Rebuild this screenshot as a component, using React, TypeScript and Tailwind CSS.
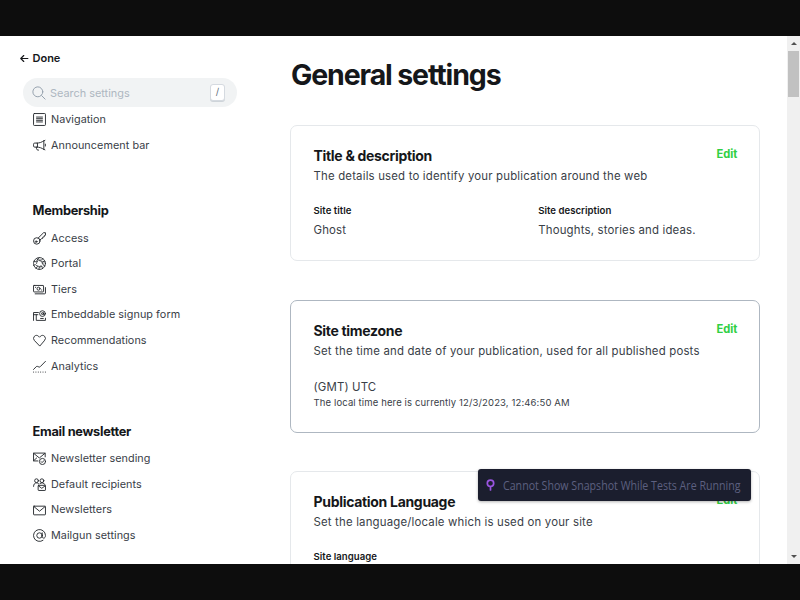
import type { ReactNode } from "react";

function Icon({ children }: { children: ReactNode }) {
  return (
    <svg
      viewBox="0 0 24 24"
      className="h-[13px] w-[13px] shrink-0 text-[#23272c]"
      fill="none"
      stroke="currentColor"
      strokeWidth="1.700"
      strokeLinecap="round"
      strokeLinejoin="round"
    >
      {children}
    </svg>
  );
}

const icons: Record<string, ReactNode> = {
  navigation: (
    <>
      <rect x="1" y="1" width="22" height="22" rx="1.5" />
      <path d="M6.5 7.5h11M6.5 10.5h11M6.5 13.5h11M6.5 16.5h11" />
    </>
  ),
  megaphone: (
    <>
      <path d="M7.5 7.5H3.2A2.2 2.2 0 0 0 1 9.700v3.100a2.200 2.200 0 0 0 2.200 2.200h4.300z" />
      <path d="M7.500 15c4.500 0 9 1.500 12.500 4.500V3C16.500 6 12 7.500 7.500 7.500" />
      <path d="M20 3.500l2-1M20 19l2 1M22.800 9.500v3.500M6 15c0 2 .6 4 2.200 5.500h2" />
    </>
  ),
  key: (
    <>
      <circle cx="7" cy="16.500" r="6" />
      <circle cx="5.800" cy="17.800" r="1.500" />
      <path d="M9.500 11.300 19.500 1.300h3.500V6l-2 .5-.3 2.500-2.600.4-.4 2.600-2.400.5-2.300 2.200" />
    </>
  ),
  portal: (
    <>
      <circle cx="12" cy="12" r="11" strokeWidth="1.600" />
      <path
        strokeWidth="1.500"
        d="M12 1 8 5.500l7 .3 3.500-2.500M22.500 9l-4.500-1 .5 6.500 3.500 2M17.500 21.500l-1-4.500-5.500 2.500.5 3.500M5 20.500l3.500-2.500-4-4-3.500 1.500M1.500 8l4.500 1 3-6"
      />
      <path strokeWidth="1.400" d="M12 6.500a5.500 5.500 0 0 1 5.500 5.500M15 16.500a5.500 5.500 0 0 1-7 0M6.500 12a5.500 5.500 0 0 1 2-4.200" />
    </>
  ),
  tiers: (
    <>
      <rect x="1" y="4.500" width="18.500" height="12" rx="1" />
      <circle cx="10.200" cy="10.500" r="2.800" />
      <path d="M4.500 8h.5M15.800 13h.4M4 20h17.500a1.500 1.500 0 0 0 1.500-1.500V8.500" />
    </>
  ),
  embed: (
    <>
      <path d="M10 6.500H1v14.500M1 10.500h8M6 10.500V21h17v-4" />
      <circle cx="17.500" cy="8.500" r="5.300" />
      <circle cx="17.500" cy="8.500" r="1.800" />
      <path d="M19.300 7v2.800c0 1.500 3 1.500 3.200-1M14 17.500h5" />
    </>
  ),
  heart: (
    <path d="M12 21.800 2.700 12.100a5.700 5.700 0 0 1 0-8c2.200-2.200 5.500-2 7.500 0L12 6l1.800-1.900c2-2 5.300-2.200 7.500 0a5.700 5.700 0 0 1 0 8z" />
  ),
  analytics: (
    <>
      <path d="M1 17.500 6 12.300c.8-.8 1.600-.9 2.600-.4l2.300 1c1 .4 1.900.2 2.600-.7L23 2.500" />
      <path d="M1 22.300h.2M5.300 22.300h.2M9.700 22.300h.2M14 22.300h.2M18.400 22.300h.2M22.800 22.300h.2" />
    </>
  ),
  sending: (
    <>
      <path d="M9 16.500H1V2h21.500v7M1.300 2.500 11.700 11 22 2.500M1.300 16l5.500-5" />
      <circle cx="17.500" cy="17.500" r="5.700" />
      <path d="m15 17.700 1.800 1.800 3.400-3.700" />
    </>
  ),
  recipients: (
    <>
      <circle cx="6.500" cy="5" r="3.500" />
      <circle cx="16.500" cy="5" r="3.500" />
      <path d="M1 15.500c0-4 2.200-6.500 5.500-6.500 1.500 0 2.800.5 3.800 1.500M12.800 10.200c3-2.200 8-1.500 9.200 1.800" />
      <rect x="9.500" y="13.500" width="13.500" height="9.500" rx="1" />
      <path d="m10 14.500 6.200 4.500 6.300-4.500" />
    </>
  ),
  mail: (
    <>
      <rect x="1" y="4" width="22" height="16" rx="1" />
      <path d="m2 5 10 8.300L22 5" />
    </>
  ),
  at: (
    <>
      <circle cx="12" cy="12" r="5" />
      <path d="M17 7v6.800c0 2 1 3 2.700 3 2.200 0 3.300-1.800 3.300-4.800a11 11 0 1 0-4.500 8.900" />
    </>
  ),
};

function NavItem({ icon, label }: { icon: string; label: string }) {
  return (
    <li className="flex h-[25.65px] items-center gap-[5.500px] whitespace-nowrap text-[10.800px] tracking-[0.060px] text-[#394047]">
      <Icon>{icons[icon]}</Icon>
      <span className="pt-px">{label}</span>
    </li>
  );
}

function NavHeading({ children }: { children: ReactNode }) {
  return (
    <h2 className="h-[18px] whitespace-nowrap text-[12.800px] leading-[18px] font-bold tracking-[-0.280px] text-[#15171a]">
      {children}
    </h2>
  );
}

function CardHeader({ title, text }: { title: string; text: string }) {
  return (
    <header className="flex items-start justify-between">
      <div>
        <h3 className="h-[20px] text-[14px] leading-[20px] font-bold tracking-[-0.310px] text-[#15171a]">{title}</h3>
        <p className="h-[20px] whitespace-nowrap text-[11.400px] leading-[20px] tracking-[0.185px] text-[#394047]">{text}</p>
      </div>
      <button className="mr-[-0.500px] pt-px text-[11.200px] leading-[15px] font-bold text-[#30cf43]">Edit</button>
    </header>
  );
}

function Field({ label, value }: { label: string; value?: string }) {
  return (
    <div className="flex-1 whitespace-nowrap">
      <h4 className="h-[16px] text-[9.600px] leading-[16px] font-semibold tracking-[0.030px] text-[#15171a]">{label}</h4>
      {value && <p className="mt-px text-[11.400px] leading-[20px] tracking-[0.180px] text-[#394047]">{value}</p>}
    </div>
  );
}

function Sidebar() {
  return (
    <aside className="w-[290px] shrink-0 pt-[14px]">
      <button className="ml-[20px] flex h-[16px] items-center gap-[3.500px] text-[11px] font-semibold text-[#15171a]">
        <svg viewBox="0 0 24 24" className="h-[9px] w-[9px]" fill="none" stroke="currentColor" strokeWidth="3" strokeLinecap="round" strokeLinejoin="round">
          <path d="M21 12H3M10 4l-8 8 8 8" />
        </svg>
        Done
      </button>
      <div className="mt-[12px] ml-[23px] flex h-[29px] w-[214px] items-center rounded-full bg-[#f1f3f4] pr-[12px] pl-[9px]">
        <svg viewBox="0 0 24 24" className="h-[14px] w-[14px] text-[#95a1ad]" fill="none" stroke="currentColor" strokeWidth="1.700" strokeLinecap="round">
          <circle cx="10" cy="10" r="8.500" />
          <path d="m16.500 16.500 6 6" />
        </svg>
        <span className="ml-[4px] flex-1 pt-px text-[10.900px] text-[#aeb7c1]">Search settings</span>
        <kbd className="flex h-[17px] w-[15px] items-center justify-center rounded-[3px] border border-[#d5dae0] bg-white font-['Inter'] text-[9.500px] text-[#626d79] shadow-[0_1px_0_#ced4d9]">/</kbd>
      </div>
      <nav className="ml-[32.500px] font-normal">
        <ul>
          <NavItem icon="navigation" label="Navigation" />
          <NavItem icon="megaphone" label="Announcement bar" />
        </ul>
        <div className="mt-[44px]">
          <NavHeading>Membership</NavHeading>
          <ul className="mt-[5px]">
            <NavItem icon="key" label="Access" />
            <NavItem icon="portal" label="Portal" />
            <NavItem icon="tiers" label="Tiers" />
            <NavItem icon="embed" label="Embeddable signup form" />
            <NavItem icon="heart" label="Recommendations" />
            <NavItem icon="analytics" label="Analytics" />
          </ul>
        </div>
        <div className="mt-[43.500px]">
          <NavHeading>Email newsletter</NavHeading>
          <ul className="mt-[5.300px]">
            <NavItem icon="sending" label="Newsletter sending" />
            <NavItem icon="recipients" label="Default recipients" />
            <NavItem icon="mail" label="Newsletters" />
            <NavItem icon="at" label="Mailgun settings" />
          </ul>
        </div>
      </nav>
    </aside>
  );
}

function Scrollbar() {
  return (
    <div className="flex w-[13px] shrink-0 flex-col items-center justify-between bg-[#f0f0f0]">
      <div className="flex w-full flex-col items-center">
        <svg viewBox="0 0 6 3" className="mt-[6px] h-[3px] w-[6px]" fill="#505050">
          <path d="M3 0l3 3H0z" />
        </svg>
        <div className="mt-[6px] h-[46px] w-[11px] bg-[#c1c1c1]" />
      </div>
      <svg viewBox="0 0 6 3" className="mb-[6px] h-[3px] w-[6px]" fill="#505050">
        <path d="M0 0h6L3 3z" />
      </svg>
    </div>
  );
}

export default function App() {
  return (
    <div className="relative flex h-[600px] w-[800px] flex-col overflow-hidden bg-[#0d0d0d] py-[36px] font-['Inter',sans-serif]">
      <div className="flex h-[528px] overflow-hidden bg-white">
        <Sidebar />
        <main className="h-[528px] w-[497px] overflow-hidden">
          <h1 className="mt-[20px] ml-[1px] h-[38px] whitespace-nowrap text-[28.500px] leading-[38px] font-bold tracking-[-1.130px] text-[#15171a]">
            General settings
          </h1>
          <section className="mt-[31px] h-[136px] w-[470.400px] rounded-[7px] border border-[#e5e8eb] px-[22.500px] pt-[20px]">
            <CardHeader title="Title & description" text="The details used to identify your publication around the web" />
            <div className="mt-[17px] flex gap-[26px]">
              <Field label="Site title" value="Ghost" />
              <Field label="Site description" value="Thoughts, stories and ideas." />
            </div>
          </section>
          <section className="mt-[38.600px] h-[133px] w-[470.400px] rounded-[7px] border border-[#aeb7c1] px-[22.500px] pt-[20px]">
            <CardHeader title="Site timezone" text="Set the time and date of your publication, used for all published posts" />
            <p className="mt-[17.400px] h-[17px] text-[11.400px] leading-[18px] tracking-[0.150px] text-[#394047]">(GMT) UTC</p>
            <p className="h-[16px] text-[9.500px] leading-[16px] tracking-[0.130px] text-[#394047]">The local time here is currently 12/3/2023, 12:46:50 AM</p>
          </section>
          <section className="mt-[38.400px] h-[180px] w-[470.400px] rounded-[7px] border border-[#e5e8eb] px-[22.500px] pt-[20px]">
            <CardHeader title="Publication Language" text="Set the language/locale which is used on your site" />
            <div className="mt-[17px] flex">
              <Field label="Site language" />
            </div>
          </section>
        </main>
        <Scrollbar />
      </div>
      <div className="absolute top-[469px] left-[478px] flex h-[32px] w-[273px] items-center rounded-[3px] bg-[#1b1e2e] pl-[8px] shadow-[0_1px_3px_rgba(0,0,0,0.3)]">
        <svg viewBox="0 0 9 12" className="h-[12px] w-[9px] shrink-0" fill="none" stroke="#9a55e0" strokeWidth="1.700" strokeLinecap="round">
          <circle cx="4.500" cy="4.300" r="3.200" />
          <path d="M4.500 7.500v3.500" />
        </svg>
        <span className="ml-[8px] inline-block origin-left scale-x-[0.886] whitespace-nowrap pt-px font-['Open_Sans',sans-serif] text-[12px] text-[#5d6080]">
          Cannot Show Snapshot While Tests Are Running
        </span>
      </div>
    </div>
  );
}
